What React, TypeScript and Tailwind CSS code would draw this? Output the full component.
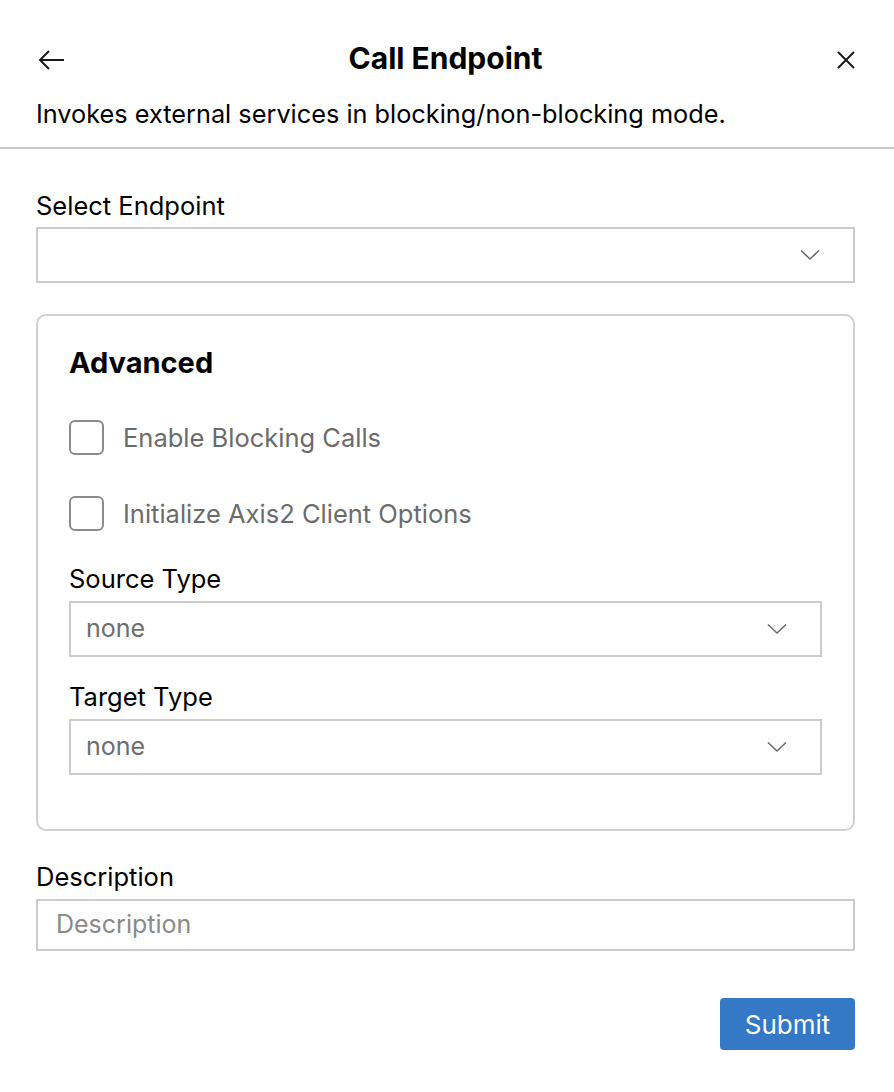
import React from "react";

const font = { fontFamily: "Inter, 'Noto Sans', sans-serif" };

const Chevron = () => (
  <svg width="20" height="12" viewBox="0 0 20 12" fill="none">
    <path d="M1 1.5 L10 10 L19 1.5" stroke="#6b6b6b" strokeWidth="1.6" />
  </svg>
);

const SelectBox = ({ value }: { value?: string }) => (
  <div className="flex h-[56px] items-center justify-between border-2 border-[#cccccc] bg-white pl-[15px] pr-[33px]">
    <span className="text-[25px] text-[#6e6e6e]">{value}</span>
    <Chevron />
  </div>
);

const Checkbox = ({ label }: { label: string }) => (
  <div className="flex items-center gap-[19px]">
    <div className="h-[35px] w-[35px] rounded-[6px] border-2 border-[#8c8c8c] bg-white" />
    <span className="text-[25.5px] leading-[30px] text-[#6b6b6b]">{label}</span>
  </div>
);

export default function App() {
  return (
    <div className="min-h-[1092px] w-[894px] bg-white text-black" style={font}>
      <div className="pl-[36px] pr-[39px] pt-[36px]">
        <div className="grid h-[40px] grid-cols-[1fr_auto_1fr] items-center">
          <svg width="28" height="22" viewBox="0 0 28 22" fill="none" className="ml-[2px] mt-[2px]">
            <path d="M26 11 H2 M11 2 L2 11 L11 20" stroke="#1a1a1a" strokeWidth="2" />
          </svg>
          <h1 className="text-[30px] font-bold">Call Endpoint</h1>
          <svg width="20" height="20" viewBox="0 0 20 20" fill="none" className="mr-[-1px] mt-[2px] justify-self-end">
            <path d="M2 2 L18 18 M18 2 L2 18" stroke="#1a1a1a" strokeWidth="2" />
          </svg>
        </div>
        <p className="mt-[23px] text-[25.3px] leading-[30px]">
          Invokes external services in blocking/non-blocking mode.
        </p>
      </div>
      <div className="mt-[18px] h-[2px] bg-[#c8c8c8]" />

      <div className="pl-[36px] pr-[39px] pt-[42px]">
        <label className="block text-[25.5px] leading-[30px]">Select Endpoint</label>
        <div className="mt-[6px]">
          <SelectBox />
        </div>

        <div className="mt-[31px] rounded-[10px] border-2 border-[#d0d0d0] px-[31px] pb-[54px] pt-[29px]">
          <h2 className="text-[29px] font-bold leading-[36px]">Advanced</h2>
          <div className="mt-[39px] flex flex-col gap-[41px]">
            <Checkbox label="Enable Blocking Calls" />
            <Checkbox label="Initialize Axis2 Client Options" />
          </div>
          <label className="mt-[33px] block text-[25.5px] leading-[30px]">Source Type</label>
          <div className="mt-[7px]">
            <SelectBox value="none" />
          </div>
          <label className="mt-[25px] block text-[25.5px] leading-[30px]">Target Type</label>
          <div className="mt-[7px]">
            <SelectBox value="none" />
          </div>
        </div>

        <label className="mt-[31px] block text-[25.5px] leading-[30px]">Description</label>
        <div className="mt-[7px] flex h-[52px] items-center border-2 border-[#cccccc] px-[18px]">
          <span className="text-[25px] text-[#8a8a8a]">Description</span>
        </div>

        <div className="mt-[47px] flex justify-end">
          <button className="h-[52px] w-[135px] rounded-[4px] bg-[#3478c6] text-[26px] text-white">
            Submit
          </button>
        </div>
      </div>
    </div>
  );
}
